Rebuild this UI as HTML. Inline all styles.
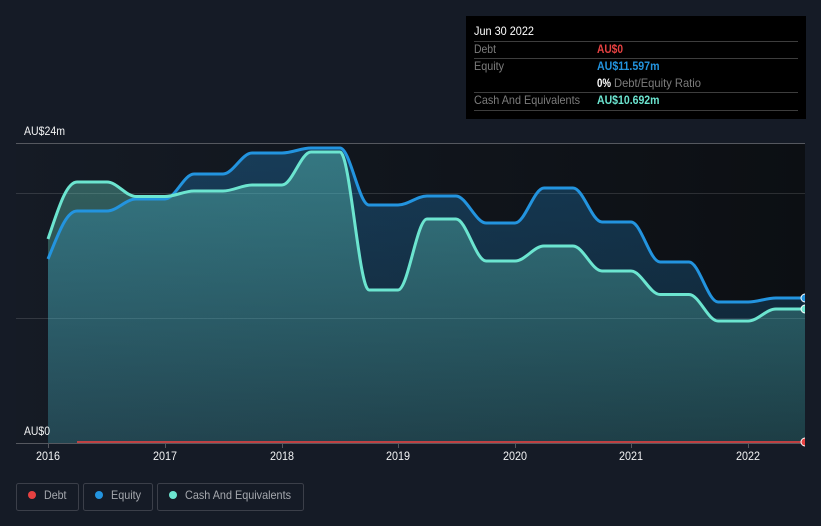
<!DOCTYPE html>
<html><head><meta charset="utf-8"><style>
html,body{margin:0;padding:0;background:#151b26;width:821px;height:526px;overflow:hidden}
svg{display:block}
text{font-family:"Liberation Sans",Arial,sans-serif;font-size:12px}
</style></head><body>
<svg width="821" height="526" viewBox="0 0 821 526" xmlns="http://www.w3.org/2000/svg">
<defs>
<linearGradient id="bg" x1="0" x2="1" y1="0" y2="0"><stop offset="0" stop-color="#151b25"/><stop offset="1" stop-color="#0c0f13"/></linearGradient>
<linearGradient id="eq" gradientUnits="userSpaceOnUse" x1="0" x2="0" y1="143" y2="443"><stop offset="0" stop-color="#2394df" stop-opacity=".30"/><stop offset="1" stop-color="#2394df" stop-opacity=".12"/></linearGradient>
<linearGradient id="ca" gradientUnits="userSpaceOnUse" x1="0" x2="0" y1="143" y2="443"><stop offset="0" stop-color="#6ce5d0" stop-opacity=".36"/><stop offset="1" stop-color="#6ce5d0" stop-opacity=".15"/></linearGradient>
<clipPath id="c"><rect x="16" y="140" width="789" height="310"/></clipPath>
</defs>
<rect width="821" height="526" fill="#151b26"/>
<rect x="16" y="143" width="789" height="300" fill="url(#bg)"/>
<g stroke-width="1">
<line x1="16" x2="805" y1="193.5" y2="193.5" stroke="#fff" stroke-opacity=".13"/>
<line x1="16" x2="805" y1="318.5" y2="318.5" stroke="#fff" stroke-opacity=".13"/>
<line x1="16" x2="805" y1="143.5" y2="143.5" stroke="#55585f"/>
<line x1="16" x2="805" y1="443.5" y2="443.5" stroke="#55585f"/>
<g stroke="#55585f"><line x1="48.5" x2="48.5" y1="443" y2="448"/><line x1="165.5" x2="165.5" y1="443" y2="448"/><line x1="282.5" x2="282.5" y1="443" y2="448"/><line x1="398.5" x2="398.5" y1="443" y2="448"/><line x1="515.5" x2="515.5" y1="443" y2="448"/><line x1="631.5" x2="631.5" y1="443" y2="448"/><line x1="748.5" x2="748.5" y1="443" y2="448"/></g>
</g>
<g clip-path="url(#c)">
<path fill="url(#eq)" d="M48,259C58,235 66,211 77,211L107,211C117,211 126,199 136,199L165,199C175,199 184,174 194,174L223,174C233,174 242,153 252,153L282,153C292,153 301,148 311,148L340,148C350,148 359,205 369,205L398,205C408,205 417,196 427,196L456,196C466,196 476,223 486,223L515,223C525,223 534,188 544,188L573,188C583,188 592,222 602,222L631,222C641,222 650,262 660,262L689,262C699,262 708,302 718,302L748,302C758,302 766,298 776,298L805,298L805,443L48,443Z"/>
<path fill="url(#ca)" d="M48,239C58,210 66,182 77,182L107,182C117,182 126,196.500 136,196.500L165,196.500C175,196.500 184,191 194,191L223,191C233,191 242,185 252,185L282,185C292,185 301,152 311,152L340,152C350,152 359,290 369,290L398,290C408,290 417,219 427,219L456,219C466,219 476,261 486,261L515,261C525,261 534,246 544,246L573,246C583,246 592,271 602,271L631,271C641,271 650,294.500 660,294.500L689,294.500C699,294.500 708,321 718,321L748,321C758,321 766,309 776,309L805,309L805,443L48,443Z"/>
<path fill="none" stroke="#2394df" stroke-width="3" d="M48,259C58,235 66,211 77,211L107,211C117,211 126,199 136,199L165,199C175,199 184,174 194,174L223,174C233,174 242,153 252,153L282,153C292,153 301,148 311,148L340,148C350,148 359,205 369,205L398,205C408,205 417,196 427,196L456,196C466,196 476,223 486,223L515,223C525,223 534,188 544,188L573,188C583,188 592,222 602,222L631,222C641,222 650,262 660,262L689,262C699,262 708,302 718,302L748,302C758,302 766,298 776,298L805,298"/>
<path fill="none" stroke="#6ce5d0" stroke-width="3" d="M48,239C58,210 66,182 77,182L107,182C117,182 126,196.500 136,196.500L165,196.500C175,196.500 184,191 194,191L223,191C233,191 242,185 252,185L282,185C292,185 301,152 311,152L340,152C350,152 359,290 369,290L398,290C408,290 417,219 427,219L456,219C466,219 476,261 486,261L515,261C525,261 534,246 544,246L573,246C583,246 592,271 602,271L631,271C641,271 650,294.500 660,294.500L689,294.500C699,294.500 708,321 718,321L748,321C758,321 766,309 776,309L805,309"/>
<line x1="77" x2="805" y1="442" y2="442" stroke="#e64141" stroke-width="2" stroke-opacity=".8"/>
<g stroke="#fff" stroke-width="1"><circle cx="805" cy="298" r="4" fill="#2394df"/><circle cx="805" cy="309" r="4" fill="#6ce5d0"/><circle cx="805" cy="442" r="4" fill="#e64141"/></g>
</g>
<g fill="#f2f3f4">
<text x="24" y="135" textLength="41" lengthAdjust="spacingAndGlyphs">AU$24m</text>
<text x="24" y="435" textLength="26" lengthAdjust="spacingAndGlyphs">AU$0</text>
<g text-anchor="middle"><text x="48" y="460" textLength="24" lengthAdjust="spacingAndGlyphs">2016</text><text x="165" y="460" textLength="24" lengthAdjust="spacingAndGlyphs">2017</text><text x="282" y="460" textLength="24" lengthAdjust="spacingAndGlyphs">2018</text><text x="398" y="460" textLength="24" lengthAdjust="spacingAndGlyphs">2019</text><text x="515" y="460" textLength="24" lengthAdjust="spacingAndGlyphs">2020</text><text x="631" y="460" textLength="24" lengthAdjust="spacingAndGlyphs">2021</text><text x="748" y="460" textLength="24" lengthAdjust="spacingAndGlyphs">2022</text></g>
</g>
<rect x="466" y="16" width="340" height="103" fill="#000"/>
<g stroke="#3d3d3d"><line x1="474" x2="798" y1="41.500" y2="41.500"/><line x1="474" x2="798" y1="58.500" y2="58.500"/><line x1="474" x2="798" y1="92.500" y2="92.500"/><line x1="474" x2="798" y1="110.500" y2="110.500"/></g>
<g>
<text x="474" y="35" fill="#fff" textLength="60" lengthAdjust="spacingAndGlyphs">Jun 30 2022</text>
<text x="474" y="53" fill="#7c7c7c" textLength="22" lengthAdjust="spacingAndGlyphs">Debt</text>
<text x="474" y="70" fill="#7c7c7c" textLength="30" lengthAdjust="spacingAndGlyphs">Equity</text>
<text x="474" y="104" fill="#7c7c7c" textLength="106" lengthAdjust="spacingAndGlyphs">Cash And Equivalents</text>
<text x="597" y="53" fill="#e64141" font-weight="bold" textLength="26" lengthAdjust="spacingAndGlyphs">AU$0</text>
<text x="597" y="70" fill="#2394df" font-weight="bold" textLength="62.500" lengthAdjust="spacingAndGlyphs">AU$11.597m</text>
<text x="597" y="87" fill="#fff" font-weight="bold" textLength="14" lengthAdjust="spacingAndGlyphs">0%</text>
<text x="614" y="87" fill="#7c7c7c" textLength="87" lengthAdjust="spacingAndGlyphs">Debt/Equity Ratio</text>
<text x="597" y="104" fill="#6ce5d0" font-weight="bold" textLength="62.500" lengthAdjust="spacingAndGlyphs">AU$10.692m</text>
</g>
<g fill="none" stroke="#3b3f49"><rect x="16.500" y="483.500" width="62" height="27" rx="2"/><rect x="83.500" y="483.500" width="69" height="27" rx="2"/><rect x="157.500" y="483.500" width="146" height="27" rx="2"/></g>
<circle cx="32" cy="495" r="4" fill="#e64141"/><circle cx="99" cy="495" r="4" fill="#2394df"/><circle cx="173" cy="495" r="4" fill="#6ce5d0"/>
<g fill="#a5a8ae"><text x="44" y="499" textLength="22.500" lengthAdjust="spacingAndGlyphs">Debt</text><text x="111" y="499" textLength="30" lengthAdjust="spacingAndGlyphs">Equity</text><text x="185" y="499" textLength="106" lengthAdjust="spacingAndGlyphs">Cash And Equivalents</text></g>
</svg>
</body></html>
